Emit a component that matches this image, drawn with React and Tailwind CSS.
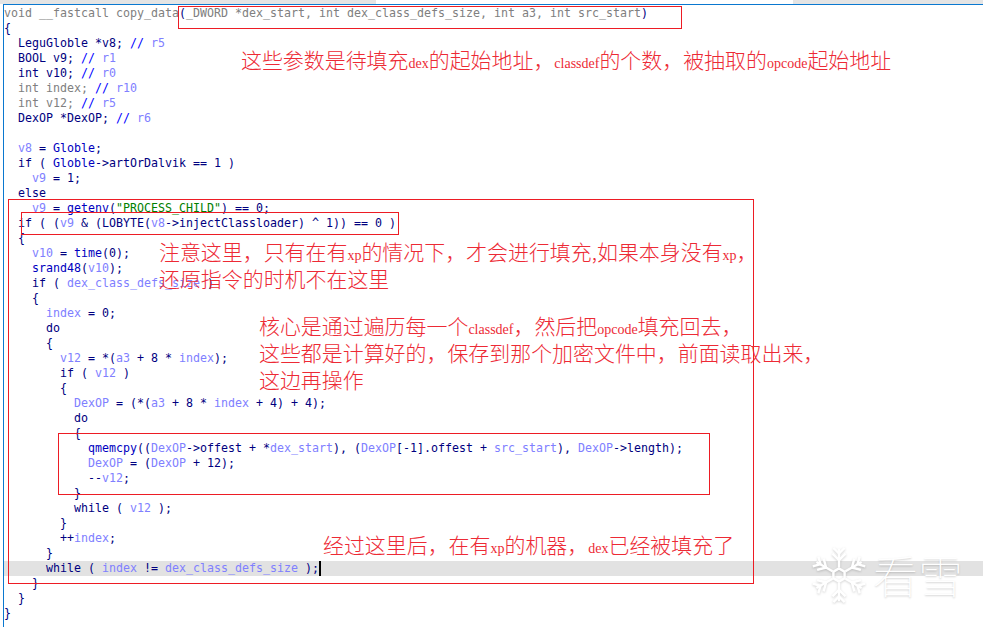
import React from "react";

// token colours of the decompiler view
const C = {
  k: "text-[#000080]",
  v: "text-[#8080ff]",
  g: "text-[#808080]",
  f: "text-[#0000c0]",
  s: "text-[#008000]",
  c: "text-[#0000ff]",
};

// Each line: list of [text, colour] pairs
const lines = [
  [["void __fastcall copy_data", "g"], ["(", "k"], ["_DWORD *dex_start, int dex_class_defs_size, int a3, int src_start", "g"], [")", "k"]],
  [["{", "k"]],
  [["  LeguGloble *v8; ", "k"], ["// ", "c"], ["r5", "v"]],
  [["  BOOL v9; ", "k"], ["// ", "c"], ["r1", "v"]],
  [["  int v10; ", "k"], ["// ", "c"], ["r0", "v"]],
  [["  int index; ", "g"], ["// ", "c"], ["r10", "v"]],
  [["  int v12; ", "g"], ["// ", "c"], ["r5", "v"]],
  [["  DexOP *DexOP; ", "k"], ["// ", "c"], ["r6", "v"]],
  [],
  [["  ", "k"], ["v8", "v"], [" = ", "k"], ["Globle", "f"], [";", "k"]],
  [["  if ( ", "k"], ["Globle", "f"], ["->artOrDalvik == 1 )", "k"]],
  [["    ", "k"], ["v9", "v"], [" = 1;", "k"]],
  [["  else", "k"]],
  [["    ", "k"], ["v9", "v"], [" = ", "k"], ["getenv", "f"], ["(", "k"], ["\"PROCESS_CHILD\"", "s"], [") == 0;", "k"]],
  [["  if ( (", "k"], ["v9", "v"], [" & (LOBYTE(", "k"], ["v8", "v"], ["->injectClassloader) ^ 1)) == 0 )", "k"]],
  [["  {", "k"]],
  [["    ", "k"], ["v10", "v"], [" = ", "k"], ["time", "f"], ["(0);", "k"]],
  [["    ", "k"], ["srand48", "f"], ["(", "k"], ["v10", "v"], [");", "k"]],
  [["    if ( ", "k"], ["dex_class_defs_size", "v"], [" )", "k"]],
  [["    {", "k"]],
  [["      ", "k"], ["index", "v"], [" = 0;", "k"]],
  [["      do", "k"]],
  [["      {", "k"]],
  [["        ", "k"], ["v12", "v"], [" = *(", "k"], ["a3", "v"], [" + 8 * ", "k"], ["index", "v"], [");", "k"]],
  [["        if ( ", "k"], ["v12", "v"], [" )", "k"]],
  [["        {", "k"]],
  [["          ", "k"], ["DexOP", "v"], [" = (*(", "k"], ["a3", "v"], [" + 8 * ", "k"], ["index", "v"], [" + 4) + 4);", "k"]],
  [["          do", "k"]],
  [["          {", "k"]],
  [["            ", "k"], ["qmemcpy", "f"], ["((", "k"], ["DexOP", "v"], ["->offest + *", "k"], ["dex_start", "v"], ["), (", "k"], ["DexOP", "v"], ["[-1].offest + ", "k"], ["src_start", "v"], ["), ", "k"], ["DexOP", "v"], ["->length);", "k"]],
  [["            ", "k"], ["DexOP", "v"], [" = (", "k"], ["DexOP", "v"], [" + 12);", "k"]],
  [["            --", "k"], ["v12", "v"], [";", "k"]],
  [["          }", "k"]],
  [["          while ( ", "k"], ["v12", "v"], [" );", "k"]],
  [["        }", "k"]],
  [["        ++", "k"], ["index", "v"], [";", "k"]],
  [["      }", "k"]],
  [["      while ( ", "k"], ["index", "v"], [" != ", "k"], ["dex_class_defs_size", "v"], [" );", "k"]],
  [["    }", "k"]],
  [["  }", "k"]],
  [["}", "k"]],
];

const CURRENT_LINE = 37;

function CodeLine({ tokens, current }) {
  return (
    <div className={`h-[15px] whitespace-pre ${current ? "bg-[#e2e2e2]" : ""}`}>
      {tokens.map(([text, color], i) => (
        <span key={i} className={C[color]}>{text}</span>
      ))}
      {current && <span className="inline-block w-[2px] h-[15px] bg-black align-top" />}
    </div>
  );
}

// Red annotation: CJK with small serif latin runs
function Note({ className, rows }) {
  return (
    <div className={`absolute text-[20.95px] text-[#ed2a35] whitespace-pre font-['Noto_Sans_CJK_SC',sans-serif] font-light ${className}`}>
      {rows.map((row, i) => (
        <div key={i} className="h-[27px] leading-[27px]">
          {row.map((part, j) =>
            j % 2 === 1 ? (
              <span key={j} className="font-['Liberation_Serif',serif] text-[14px] leading-none">{part}</span>
            ) : (
              <span key={j}>{part}</span>
            )
          )}
        </div>
      ))}
    </div>
  );
}

function Snowflake() {
  const arm = (
    <g>
      <path d="M0 -8 V-28" />
      <path d="M-7 -23 L0 -16 L7 -23" />
      <path d="M-6 -29 L0 -23 L6 -29" />
    </g>
  );
  return (
    <svg viewBox="-30 -30 60 60" className="w-[56px] h-[60px]" fill="none" stroke="#ffffff" strokeWidth="2.6">
      <g style={{ filter: "drop-shadow(0 1px 1px rgba(0,0,0,0.18))" }}>
        <path d="M0 -7 L6 -3.5 V3.5 L0 7 L-6 3.5 V-3.5 Z" />
        {[0, 60, 120, 180, 240, 300].map((a) => (
          <g key={a} transform={`rotate(${a})`}>{arm}</g>
        ))}
      </g>
    </svg>
  );
}

export default function App() {
  return (
    <div className="relative w-[983px] h-[627px] overflow-hidden bg-white">
      {/* window chrome on top */}
      <div className="flex h-[4px]">
        <div className="w-[376px] bg-[#e4e4e4]" />
        <div className="w-[417px] bg-white" />
        <div className="flex-1 bg-[#e4e4e4]" />
      </div>
      <div className="ml-[3px] h-[1px] bg-[#0a78d0]" />

      {/* decompiler text */}
      <div className="ml-[3px] h-[622px] border-l border-[#0a78d0] pt-[1px] font-['DejaVu_Sans_Mono',monospace] text-[11.63px] leading-[15px]">
        {lines.map((tokens, i) => (
          <CodeLine key={i} tokens={tokens} current={i === CURRENT_LINE} />
        ))}
      </div>

      {/* red boxes drawn over the screenshot */}
      <div className="absolute left-[178px] top-[6px] w-[504px] h-[23px] border border-[#ed1c24]" />
      <div className="absolute left-[8px] top-[199px] w-[746px] h-[385px] border border-[#ed1c24]" />
      <div className="absolute left-[21px] top-[212px] w-[378px] h-[23px] border border-[#ed1c24]" />
      <div className="absolute left-[58px] top-[433px] w-[652px] h-[62px] border border-[#ed1c24]" />

      <Note className="left-[241px] top-[46px]" rows={[["这些参数是待填充", "dex", "的起始地址，", "classdef", "的个数，被抽取的", "opcode", "起始地址"]]} />
      <Note className="left-[159px] top-[238px]" rows={[["注意这里，只有在有", "xp", "的情况下，才会进行填充,如果本身没有", "xp", "，"], ["还原指令的时机不在这里"]]} />
      <Note className="left-[259px] top-[312px]" rows={[["核心是通过遍历每一个", "classdef", "，然后把", "opcode", "填充回去，"], ["这些都是计算好的，保存到那个加密文件中，前面读取出来，"], ["这边再操作"]]} />
      <Note className="left-[323px] top-[531px]" rows={[["经过这里后，在有", "xp", "的机器，", "dex", "已经被填充了"]]} />

      {/* watermark */}
      <div className="absolute left-[811px] top-[545px] flex items-center gap-[6px]">
        <Snowflake />
        <span className="font-['Noto_Sans_CJK_SC',sans-serif] font-thin text-[45px] leading-[60px] text-white [text-shadow:0_1px_2px_rgba(0,0,0,0.2)]">看雪</span>
      </div>
    </div>
  );
}
